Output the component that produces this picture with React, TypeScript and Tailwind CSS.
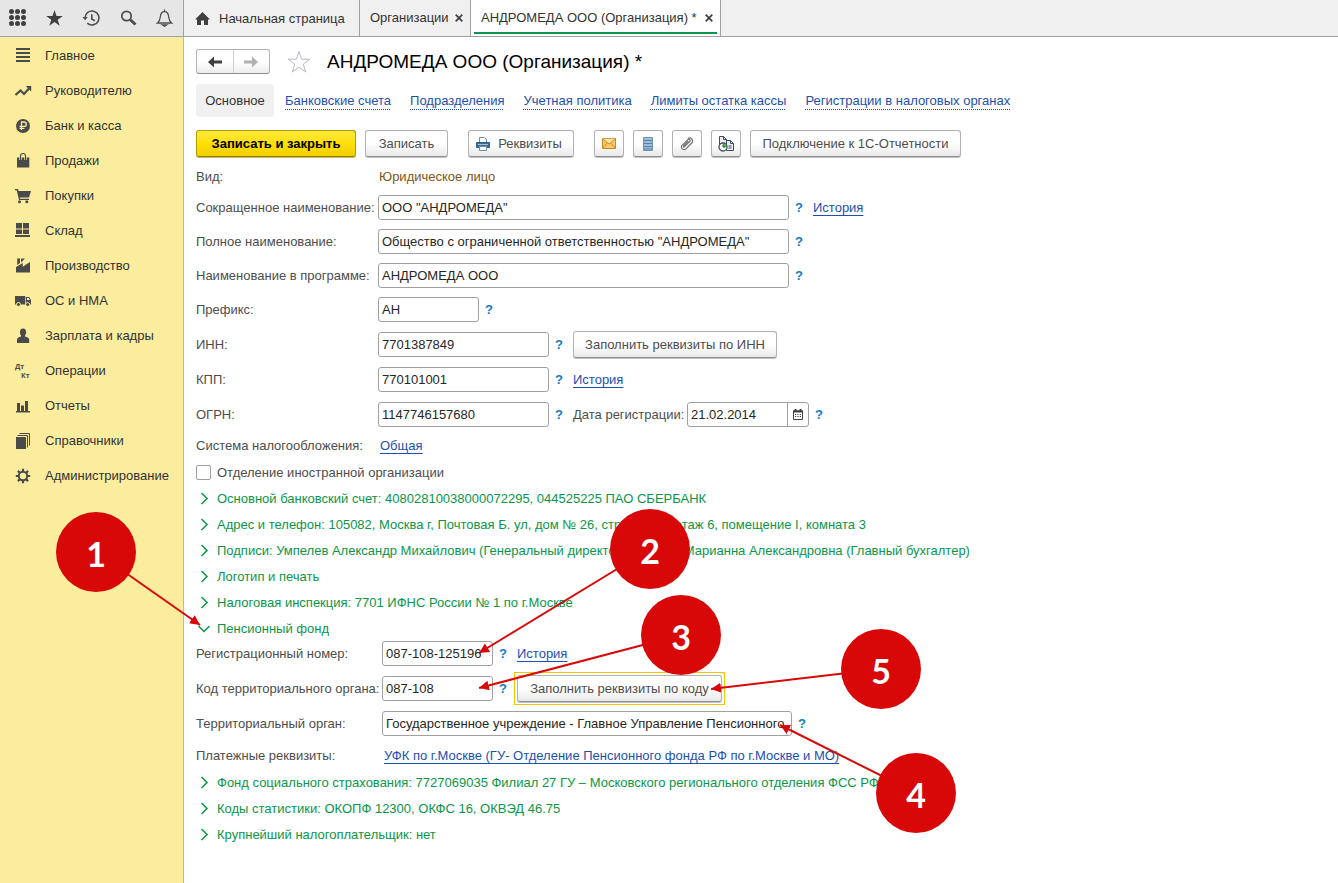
import type { ReactNode } from "react";
import clsx from "clsx";

// ---------------------------------------------------------------------------
// Icons
// ---------------------------------------------------------------------------

function SideIcon({ children }: { children: ReactNode }) {
  return (
    <svg width="18" height="18" viewBox="0 0 18 18" fill="#4a4a4a" aria-hidden="true" className="shrink-0">
      {children}
    </svg>
  );
}

const MENU: { label: string; icon: ReactNode }[] = [
  { label: "Главное", icon: <path d="M2 1h14v2H2zM2 5h14v2H2zM2 9h14v2H2zM2 13h14v2H2z" /> },
  {
    label: "Руководителю",
    icon: (
      <>
        <path d="M1.5 13 6.5 8.5 10 12 15 6.5" fill="none" stroke="#4a4a4a" strokeWidth="2.2" />
        <path d="M11.8 4h5.4v5.4z" />
      </>
    ),
  },
  {
    label: "Банк и касса",
    icon: (
      <>
        <circle cx="9" cy="9" r="7" />
        <path d="M7.5 13V5h2.6a2.1 2.1 0 0 1 0 4.4H5.5M5.5 11.3h5" fill="none" stroke="#fbec9e" strokeWidth="1.3" />
      </>
    ),
  },
  {
    label: "Продажи",
    icon: (
      <>
        <path d="M3 5.500h12.300v10H3z" />
        <path d="M6.500 8V4a2.500 2.500 0 0 1 5 0v4" fill="none" stroke="#fbec9e" strokeWidth="2.400" />
        <path d="M6.500 8V4a2.500 2.500 0 0 1 5 0v4" fill="none" stroke="#4a4a4a" strokeWidth="1.100" />
      </>
    ),
  },
  {
    label: "Покупки",
    icon: (
      <>
        <path d="M1 2h3l.6 2H17l-2 6.500H5.800l.4 1.300H15V13H5L2.700 3.300H1z" />
        <circle cx="5.500" cy="14.700" r="1.500" />
        <circle cx="12.800" cy="14.700" r="1.500" />
      </>
    ),
  },
  {
    label: "Склад",
    icon: <path d="M2 1h6v5.500H2zM9 1h6v5.500H9zM2 7.500h6V12H2zM9 7.500h6V12H9zM1 13h15v2H1z" />,
  },
  {
    label: "Производство",
    icon: <path d="M2 15.500V10L8.700 6v3.800L16 5v10.500zM3.200 1.500H6V6L3.200 8zM7 1.500h4L7 5.500z" />,
  },
  {
    label: "ОС и НМА",
    icon: (
      <>
        <path d="M1 4h10.300v8.500H1zM12 5h3.200L17 8v4.500h-5z" />
        <path d="M13 6h1.800l1 2H13z" fill="#fbec9e" />
        <circle cx="4.500" cy="12.500" r="2" stroke="#fbec9e" strokeWidth="1" />
        <circle cx="13.700" cy="12.500" r="2" stroke="#fbec9e" strokeWidth="1" />
      </>
    ),
  },
  {
    label: "Зарплата и кадры",
    icon: (
      <>
        <ellipse cx="9" cy="5.300" rx="3.100" ry="3.800" />
        <path d="M3 16v-3.500C3 10.800 5 10 7 9.500V8h4v1.500c2 .5 4.200 1.300 4.200 3V16z" />
      </>
    ),
  },
  {
    label: "Операции",
    icon: (
      <>
        <text x="1" y="7" fontSize="7" fontWeight="700" fontFamily="Open Sans, sans-serif">Дт</text>
        <text x="7" y="16" fontSize="7" fontWeight="700" fontFamily="Open Sans, sans-serif">Кт</text>
      </>
    ),
  },
  { label: "Отчеты", icon: <path d="M3 6h3v8h1V8.500h3V14h1V4h3v10h2v1.500H2V14h1z" /> },
  {
    label: "Справочники",
    icon: (
      <>
        <path d="M2 5h10v12H2z" />
        <path d="M3.500 3.500h10v12M5.500 1.500h10v12" fill="none" stroke="#4a4a4a" strokeWidth="1" />
      </>
    ),
  },
  {
    label: "Администрирование",
    icon: (
      <>
        <circle cx="9" cy="9" r="4.200" fill="none" stroke="#4a4a4a" strokeWidth="2" />
        <path
          d="M9 1.800V4.500M9 13.500V16.200M1.800 9H4.500M13.500 9H16.200M3.900 3.900l1.900 1.900M12.200 12.200l1.900 1.900M3.900 14.100l1.900-1.900M12.200 5.800l1.900-1.900"
          stroke="#4a4a4a"
          strokeWidth="2.200"
        />
      </>
    ),
  },
];

const TOOLS: { label: string; icon: ReactNode }[] = [
  {
    label: "Меню функций",
    icon: (
      <g fill="#404040">
        {[2.5, 8.5, 14.5].map((y) => [2.5, 8.5, 14.5].map((x) => <circle key={`${x}-${y}`} cx={x} cy={y} r="2.5" />))}
      </g>
    ),
  },
  {
    label: "Избранное",
    icon: <path d="M9.500 1l2 6h6.300l-5.100 3.700 2 6-5.200-3.700-5.200 3.700 2-6L1.200 7h6.300z" fill="#404040" />,
  },
  {
    label: "История",
    icon: (
      <g fill="none" stroke="#4d4d4d" strokeWidth="1.6">
        <path d="M3 9a7 7 0 1 1 2.300 5.200" />
        <path d="M9.800 5.200V10l3 1.800" />
        <path d="M.4 8h5.400L3.100 11.300z" fill="#4d4d4d" stroke="none" />
      </g>
    ),
  },
  {
    label: "Поиск",
    icon: (
      <g fill="none" stroke="#4d4d4d">
        <circle cx="7.5" cy="7" r="4.700" strokeWidth="1.700" />
        <path d="M11 10.500l5.500 5" strokeWidth="3" />
      </g>
    ),
  },
  {
    label: "Оповещения",
    icon: (
      <g fill="none" stroke="#4d4d4d" strokeWidth="1.3">
        <path d="M2.500 14c2-1.500 2.500-3 2.800-6C5.600 4.500 7 2.700 9.500 2.700S13.400 4.500 13.700 8c.3 3 .8 4.500 2.800 6z" />
        <path d="M9.500.5v2" />
        <path d="M7.500 16h4l-2 1.200z" fill="#4d4d4d" />
      </g>
    ),
  },
];

function Chevron({ open }: { open?: boolean }) {
  return (
    <svg width="16" height="16" viewBox="0 0 16 16" fill="none" stroke="#0a9648" strokeWidth="1.500" aria-hidden="true">
      <path d={open ? "M2.500 6 8 11.500 13.500 6" : "M5.500 3 11 8.500 5.500 14"} />
    </svg>
  );
}

// ---------------------------------------------------------------------------
// Form controls
// ---------------------------------------------------------------------------

const BUTTON =
  "flex h-[27px] items-center justify-center rounded-[3px] border border-[#b2b2b2] border-b-[#8f8f8f] bg-gradient-to-b from-white from-50% to-[#e9e9e9] whitespace-nowrap text-[#4d4d4d] shadow-[0_1px_0_#c4c4c4]";

const LINK = "whitespace-nowrap text-[#1c50b0] underline decoration-1 underline-offset-3";

function Help() {
  return (
    <button type="button" aria-label="Подсказка" className="w-6 shrink-0 pl-[6px] text-left font-bold text-[#0d7dc4]">
      ?
    </button>
  );
}

type FieldProps = {
  id: string;
  label: string;
  value: string;
  width: string;
  labelWidth?: string;
  children?: ReactNode;
};

function Field({ id, label, value, width, labelWidth = "w-[182px]", children }: FieldProps) {
  return (
    <div className="flex h-[25px] items-center">
      <label htmlFor={id} className={clsx("shrink-0 whitespace-nowrap", labelWidth)}>
        {label}
      </label>
      <input
        id={id}
        defaultValue={value}
        className={clsx("h-[25px] rounded-[3px] border border-[#a0a0a0] bg-white px-[3px] text-[#262626]", width)}
      />
      <Help />
      {children}
    </div>
  );
}

function Group({ open, children }: { open?: boolean; children: ReactNode }) {
  return (
    <button
      type="button"
      aria-expanded={!!open}
      className="flex h-[26px] items-center gap-[5px] whitespace-nowrap text-[#0a9648]"
    >
      <Chevron open={open} />
      <span className="pt-0.5">{children}</span>
    </button>
  );
}

// ---------------------------------------------------------------------------
// Page chrome
// ---------------------------------------------------------------------------

function TopBar() {
  return (
    <header className="flex h-[37px] border-b border-[#a0a0a0] bg-[#f0f0f0] text-[#333]">
      <div className="flex w-[184px] shrink-0 border-r border-[#a0a0a0] bg-[#e6e6e6]">
        {TOOLS.map((tool) => (
          <button key={tool.label} type="button" aria-label={tool.label} className="flex flex-1 items-center justify-center">
            <svg width="19" height="19" viewBox="0 0 19 19">
              {tool.icon}
            </svg>
          </button>
        ))}
      </div>
      <nav className="flex">
        <a href="#home" className="flex w-[176px] items-center gap-[9px] border-r border-[#a0a0a0] pt-px pl-[11px]">
          <svg width="15" height="14" viewBox="0 0 15 14" fill="#404040" aria-hidden="true">
            <path d="M7.500 0 15 7.500h-2V13H9V8.500H6V13H2V7.500H0z" />
          </svg>
          Начальная страница
        </a>
        <Tab label="Организации" width="w-[111px]" />
        <Tab label="АНДРОМЕДА ООО (Организация) *" width="w-[250px]" active />
      </nav>
    </header>
  );
}

function Tab({ label, width, active }: { label: string; width: string; active?: boolean }) {
  return (
    <div className={clsx("flex border-r border-[#a0a0a0] px-[3px]", width, active && "bg-white")}>
      <div
        className={clsx(
          "mb-[2px] flex flex-1 items-center justify-between border-b-2 pt-1 pr-1 pl-[7px]",
          active ? "border-[#0a9648]" : "border-transparent",
        )}
      >
        <a href="#tab" className="whitespace-nowrap">
          {label}
        </a>
        <button type="button" aria-label="Закрыть">
          <svg width="8" height="8" viewBox="0 0 8 8" stroke="#404040" strokeWidth="1.700">
            <path d="M.7.7l6.600 6.600M7.300.7.7 7.300" />
          </svg>
        </button>
      </div>
    </div>
  );
}

function Sidebar() {
  return (
    <nav className="w-[184px] shrink-0 border-r border-[#c5bc85] bg-[#fbec9e] pt-px text-[#333]">
      {MENU.map((item) => (
        <a key={item.label} href="#section" className="flex h-[35px] items-center gap-[13px] pl-[14px] whitespace-nowrap">
          <SideIcon>{item.icon}</SideIcon>
          {item.label}
        </a>
      ))}
    </nav>
  );
}

function Toolbar() {
  return (
    <div className="mt-[13px] flex">
      <button
        type="button"
        className="h-[27px] w-[160px] rounded-[3px] border border-[#b39b00] border-b-[#948000] bg-gradient-to-b from-[#ffe838] via-[#ffe000] to-[#f0cf00] font-bold whitespace-nowrap text-black shadow-[0_1px_0_#c9bc60]"
      >
        Записать и закрыть
      </button>
      <button type="button" className={clsx(BUTTON, "ml-[9px] w-[83px]")}>Записать</button>
      <button type="button" className={clsx(BUTTON, "ml-5 w-[106px] gap-2 pr-1")}>
        <svg width="14" height="14" viewBox="0 0 14 14" fill="none" stroke="#305f87" aria-hidden="true">
          <path d="M3.500 5V.5h5l2 2V5" fill="#fff" stroke="#6b8fae" />
          <path d="M.5 5.500h13v5H.5z" fill="#3f6f96" />
          <path d="M3.500 9.500h7v4h-7z" fill="#fff" stroke="#6b8fae" />
          <path d="M2 7.500h10" stroke="#a8c0d4" />
        </svg>
        Реквизиты
      </button>
      <div className="ml-5 flex gap-[9px]">
        <button type="button" aria-label="Письмо" className={clsx(BUTTON, "w-[30px]")}>
          <svg width="14" height="11" viewBox="0 0 14 11" stroke="#c98a22">
            <path d="M.5.5h13v10H.5z" fill="#f9c765" />
            <path d="M.5.8 7 6l6.500-5.200M.5 10.200l4.500-5M13.500 10.200l-4.500-5" fill="#fde3ab" />
          </svg>
        </button>
        <button type="button" aria-label="Список" className={clsx(BUTTON, "w-[30px]")}>
          <svg width="10" height="14" viewBox="0 0 10 14">
            <path d="M.5.5h9v13h-9z" fill="#9dbfd8" stroke="#6b94b2" />
            <path d="M1 3.500h8M1 6.500h8M1 9.500h8M1 12h8" stroke="#54809f" />
          </svg>
        </button>
        <button type="button" aria-label="Файлы" className={clsx(BUTTON, "w-[30px]")}>
          <svg width="14" height="14" viewBox="0 0 14 14" fill="none" stroke="#737373" strokeWidth="1.200">
            <path d="M4 10.200 9.700 4.500a1.300 1.300 0 0 0-1.900-1.900L2.300 8.100a2.600 2.600 0 0 0 3.700 3.700l5.800-5.800a3.200 3.200 0 0 0-4-4.800M4 10.200a1 1 0 0 1-.3-1.500l4.500-4.500" />
          </svg>
        </button>
        <button type="button" aria-label="История отправки" className={clsx(BUTTON, "w-[30px]")}>
          <svg width="16" height="16" viewBox="0 0 16 16" fill="#e9edf0" stroke="#3d4e5c">
            <path d="M1.500.5h4l3 3v8h-7z" />
            <path d="M8.500 4.500h4l3 3v7h-7z" />
            <path d="M12.500 4.500v3h3M5.500.5v3h3M10.500 10h3M10.500 12h3" fill="none" />
            <circle cx="5" cy="11" r="4" fill="#fff" strokeWidth="1.300" />
            <path d="M5 11V7.700A3.300 3.300 0 0 1 8.300 11z" fill="#3fc43f" stroke="none" />
            <path d="M5 8.500V11h2.500" fill="none" />
          </svg>
        </button>
        <button type="button" className={clsx(BUTTON, "w-[211px]")}>Подключение к 1С-Отчетности</button>
      </div>
    </div>
  );
}

// ---------------------------------------------------------------------------
// Numbered callouts over the form
// ---------------------------------------------------------------------------

function Callouts() {
  return (
    <div className="pointer-events-none absolute inset-0 overflow-hidden">
      <svg className="h-full w-full" stroke="#d80808" strokeWidth="2" aria-hidden="true">
        <defs>
          <marker id="head" markerWidth="12" markerHeight="12" refX="10" refY="5" orient="auto" markerUnits="userSpaceOnUse">
            <path d="M0 0l10 5-10 5z" fill="#d80808" stroke="none" />
          </marker>
        </defs>
        <path d="M96 552 200 625" markerEnd="url(#head)" />
        <path d="M650 549 479 653" markerEnd="url(#head)" />
        <path d="M681 635 479 688" markerEnd="url(#head)" />
        <path d="M916 793 780 725" markerEnd="url(#head)" />
        <path d="M881 669 711 689" markerEnd="url(#head)" />
      </svg>
      <Badge place="left-[56px] top-[512px]">1</Badge>
      <Badge place="left-[610px] top-[509px]">2</Badge>
      <Badge place="left-[641px] top-[595px]">3</Badge>
      <Badge place="left-[876px] top-[753px]">4</Badge>
      <Badge place="left-[841px] top-[629px]">5</Badge>
    </div>
  );
}

function Badge({ place, children }: { place: string; children: ReactNode }) {
  return (
    <span
      className={clsx(
        "absolute flex size-20 items-center justify-center rounded-full bg-[#d80808] pt-1 font-[Lato,sans-serif] text-[34px] leading-none font-bold text-white",
        place,
      )}
    >
      {children}
    </span>
  );
}

// ---------------------------------------------------------------------------
// Main page
// ---------------------------------------------------------------------------

const SECTIONS = [
  "Банковские счета",
  "Подразделения",
  "Учетная политика",
  "Лимиты остатка кассы",
  "Регистрации в налоговых органах",
];

export default function App() {
  return (
    <div className="relative flex min-h-screen flex-col bg-white font-['Liberation_Sans',Arial,sans-serif] text-[13px] leading-4 text-[#4d4d4d]">
      <TopBar />
      <div className="flex flex-1">
        <Sidebar />
        <main className="min-w-0 flex-1 pt-3 pb-4 pl-3">
          <div className="flex h-[25px] items-center">
            <div className="flex h-[25px] w-[74px] rounded-[3px] border border-[#b2b2b2] border-b-[#8f8f8f] bg-gradient-to-b from-white from-50% to-[#ededed]">
              <button type="button" aria-label="Назад" className="flex flex-1 items-center justify-center border-r border-[#d0d0d0]">
                <svg width="14" height="12" viewBox="0 0 14 12" fill="#404040">
                  <path d="M0 6l6-5.500V4.500h8v3H6v4z" />
                </svg>
              </button>
              <button type="button" aria-label="Вперед" className="flex flex-1 items-center justify-center">
                <svg width="14" height="12" viewBox="0 0 14 12" fill="#b0b0b0">
                  <path d="M14 6L8 .5V4.500H0v3h8v4z" />
                </svg>
              </button>
            </div>
            <button type="button" aria-label="В избранное" className="ml-[17px]">
              <svg width="24" height="24" viewBox="0 0 24 24" fill="#fff" stroke="#b4b9bf">
                <path d="M12 1.500l2.700 7.700h8l-6.400 4.900 2.400 7.900-6.700-4.800L5.300 22l2.400-7.900L1.300 9.200h8z" />
              </svg>
            </button>
            <h1 className="ml-4 text-[19px] leading-6 whitespace-nowrap text-black">АНДРОМЕДА ООО (Организация) *</h1>
          </div>

          <nav className="mt-[10px] flex h-[33px] items-center gap-[19px] whitespace-nowrap">
            <a href="#main" className="-mr-2 flex h-[33px] w-[78px] items-center justify-center rounded-[4px] bg-[#f0f0f0] pt-px text-[#333]">
              Основное
            </a>
            {SECTIONS.map((section) => (
              <a
                key={section}
                href="#section"
                className="pt-px text-[#1c50b0] underline decoration-dotted decoration-1 underline-offset-4"
              >
                {section}
              </a>
            ))}
          </nav>

          <Toolbar />

          <div className="flex h-[38px] items-center pt-0.5">
            <span className="w-[183px]">Вид:</span>
            <span className="text-[#805515]">Юридическое лицо</span>
          </div>

          <div className="flex flex-col gap-[9px]">
            <Field id="short" label="Сокращенное наименование:" value={'ООО "АНДРОМЕДА"'} width="w-[411px]">
              <a href="#history" className={LINK}>История</a>
            </Field>
            <Field
              id="full"
              label="Полное наименование:"
              value={'Общество с ограниченной ответственностью "АНДРОМЕДА"'}
              width="w-[411px]"
            />
            <Field id="name" label="Наименование в программе:" value="АНДРОМЕДА ООО" width="w-[411px]" />
            <Field id="prefix" label="Префикс:" value="АН" width="w-[101px]" />
          </div>

          <div className="mt-[10px] flex flex-col gap-[10px]">
            <Field id="inn" label="ИНН:" value="7701387849" width="w-[171px]">
              <button type="button" className={clsx(BUTTON, "w-[204px]")}>Заполнить реквизиты по ИНН</button>
            </Field>
            <Field id="kpp" label="КПП:" value="770101001" width="w-[171px]">
              <a href="#history" className={LINK}>История</a>
            </Field>
            <Field id="ogrn" label="ОГРН:" value="1147746157680" width="w-[171px]">
              <label htmlFor="date" className="w-[114px] whitespace-nowrap">Дата регистрации:</label>
              <div className="flex h-[25px] w-[122px] rounded-[3px] border border-[#a0a0a0]">
                <input id="date" defaultValue="21.02.2014" className="min-w-0 flex-1 px-[3px] text-[#262626]" />
                <button type="button" aria-label="Выбрать дату" className="flex w-[21px] items-center justify-center border-l border-[#a0a0a0]">
                  <svg width="10" height="11" viewBox="0 0 10 11" stroke="#404040">
                    <path d="M.5 2h9v8.500h-9z" fill="none" />
                    <path d="M0 2.500h10M2.500 0v2M7.500 0v2" strokeWidth="2" />
                    <path d="M2 5.500h6M2 7.500h6" strokeDasharray="1.200 1.200" />
                  </svg>
                </button>
              </div>
              <Help />
            </Field>
          </div>

          <div className="mt-[3px] flex h-[30px] items-center pt-px">
            <span className="w-[184px]">Система налогообложения:</span>
            <a href="#tax" className={LINK}>Общая</a>
          </div>
          <label className="flex h-[25px] items-center gap-[6px]">
            <input type="checkbox" className="size-[15px] appearance-none rounded-[2px] border border-[#a0a0a0] bg-white" />
            Отделение иностранной организации
          </label>

          <Group>Основной банковский счет: 40802810038000072295, 044525225 ПАО СБЕРБАНК</Group>
          <Group>Адрес и телефон: 105082, Москва г, Почтовая Б. ул, дом № 26, строение 1, этаж 6, помещение I, комната 3</Group>
          <Group>Подписи: Умпелев Александр Михайлович (Генеральный директор), Орлова Марианна Александровна (Главный бухгалтер)</Group>
          <Group>Логотип и печать</Group>
          <Group>Налоговая инспекция: 7701 ИФНС России № 1 по г.Москве</Group>
          <Group open>Пенсионный фонд</Group>

          <div className="flex flex-col gap-[10px]">
            <Field id="reg" label="Регистрационный номер:" value="087-108-125196" width="w-[111px]" labelWidth="w-[186px]">
              <a href="#history" className={LINK}>История</a>
            </Field>
            <Field id="code" label="Код территориального органа:" value="087-108" width="w-[111px]" labelWidth="w-[186px]">
              <div className="-ml-[3px] border border-[#f5c400] p-[2px]">
                <button type="button" className={clsx(BUTTON, "w-[205px]")}>
                  Заполнить реквизиты по коду
                </button>
              </div>
            </Field>
            <Field
              id="office"
              label="Территориальный орган:"
              value="Государственное учреждение - Главное Управление Пенсионного фонда РФ"
              width="w-[410px]"
              labelWidth="w-[186px]"
            />
          </div>
          <div className="mt-[5px] flex h-7 items-center pt-0.5">
            <span className="w-[188px]">Платежные реквизиты:</span>
            <a href="#payment" className={LINK}>УФК по г.Москве (ГУ- Отделение Пенсионного фонда РФ по г.Москве и МО)</a>
          </div>

          <Group>Фонд социального страхования: 7727069035 Филиал 27 ГУ – Московского регионального отделения ФСС РФ</Group>
          <Group>Коды статистики: ОКОПФ 12300, ОКФС 16, ОКВЭД 46.75</Group>
          <Group>Крупнейший налогоплательщик: нет</Group>
        </main>
      </div>
      <Callouts />
    </div>
  );
}
